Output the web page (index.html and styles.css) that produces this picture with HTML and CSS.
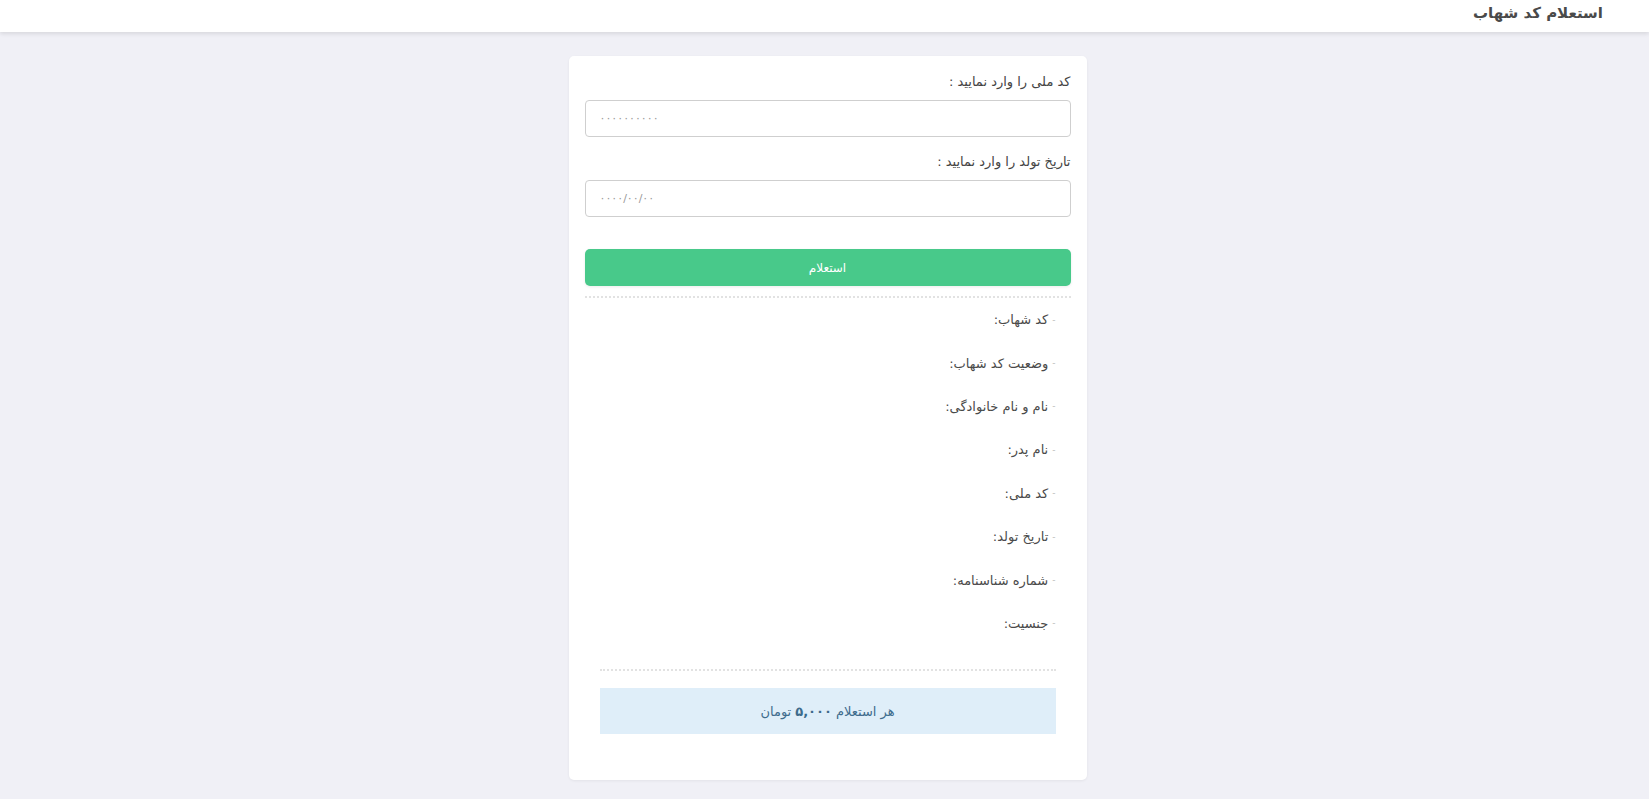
FILE: index.html
```html
<!DOCTYPE html>
<html lang="fa" dir="rtl">
<head>
    <meta charset="UTF-8">
    <meta name="viewport" content="width=device-width, initial-scale=1.0">
    <title>استعلام کد شهاب</title>
    <link rel="stylesheet" href="styles.css">
</head>
<body>
    <header class="topbar">
        <h1>استعلام کد شهاب</h1>
    </header>

    <main class="page">
        <div class="card">
            <label class="field-label" for="nationalCode">کد ملی را وارد نمایید :</label>
            <input type="text" id="nationalCode" class="field" placeholder="۰۰۰۰۰۰۰۰۰۰">

            <label class="field-label" for="birthDate">تاریخ تولد را وارد نمایید :</label>
            <input type="text" id="birthDate" class="field" placeholder="۰۰۰۰/۰۰/۰۰">

            <button class="btn-submit">استعلام</button>

            <div class="result">
                <ul class="result-list">
                    <li>کد شهاب:</li>
                    <li>وضعیت کد شهاب:</li>
                    <li>نام و نام خانوادگی:</li>
                    <li>نام پدر:</li>
                    <li>کد ملی:</li>
                    <li>تاریخ تولد:</li>
                    <li>شماره شناسنامه:</li>
                    <li>جنسیت:</li>
                </ul>
                <div class="price">هر استعلام <b>۵,۰۰۰</b> تومان</div>
            </div>
        </div>
    </main>
</body>
</html>
```

FILE: styles.css
```css
body {
    margin: 0;
    font-family: "DejaVu Sans", "Noto Sans", sans-serif;
    background-color: #f0f0f6;
    color: #444;
}
.topbar {
    height: 32px;
    background-color: #fff;
    box-shadow: 0 2px 4px rgba(0, 0, 0, 0.1);
    padding: 0 46px;
    display: flex;
    align-items: center;
}
.topbar h1 {
    margin: 0 0 6px;
    font-size: 15px;
    font-weight: bold;
    color: #4a4a4a;
}
.page {
    padding: 24px 0 20px 6px;
}
.card {
    width: 486px;
    margin: 0 auto;
    padding: 16px 16px 46px;
    background-color: #fff;
    border-radius: 5px;
    box-shadow: 0 1px 3px rgba(0, 0, 0, 0.06);
    display: flex;
    flex-direction: column;
}
.field-label {
    font-size: 13px;
    line-height: 20px;
    color: #444;
    margin-bottom: 8px;
}
.field {
    height: 37px;
    box-sizing: border-box;
    border: 1px solid #cfcfcf;
    border-radius: 4px;
    padding: 0 14px;
    font-family: inherit;
    font-size: 11px;
    direction: ltr;
    text-align: left;
    margin-bottom: 15px;
}
.field::placeholder {
    color: #999;
    letter-spacing: 1px;
}
.btn-submit {
    margin-top: 17px;
    height: 37px;
    border: none;
    border-radius: 5px;
    background-color: #48c98a;
    color: #fff;
    font-family: inherit;
    font-size: 12px;
    box-shadow: 0 1px 3px rgba(0, 0, 0, 0.08);
}
.result {
    margin-top: 10px;
    border-top: 2px dotted #e2e2e2;
}
.result-list {
    list-style: none;
    margin: 0 15px;
    padding: 0 0 24px 0;
    border-bottom: 2px dotted #e2e2e2;
}
.result-list li {
    height: 43.4px;
    display: flex;
    align-items: center;
    font-size: 13px;
    color: #4a4a4a;
}
.result-list li::before {
    content: "-";
    color: #bbb;
    font-size: 9px;
    margin-left: 4px;
}
.price {
    margin: 17px 15px 0;
    height: 46px;
    background-color: #dfeef9;
    color: #3d6b8c;
    font-size: 13px;
    display: flex;
    align-items: center;
    justify-content: center;
}
.price b {
    margin: 0 4px;
}
```
